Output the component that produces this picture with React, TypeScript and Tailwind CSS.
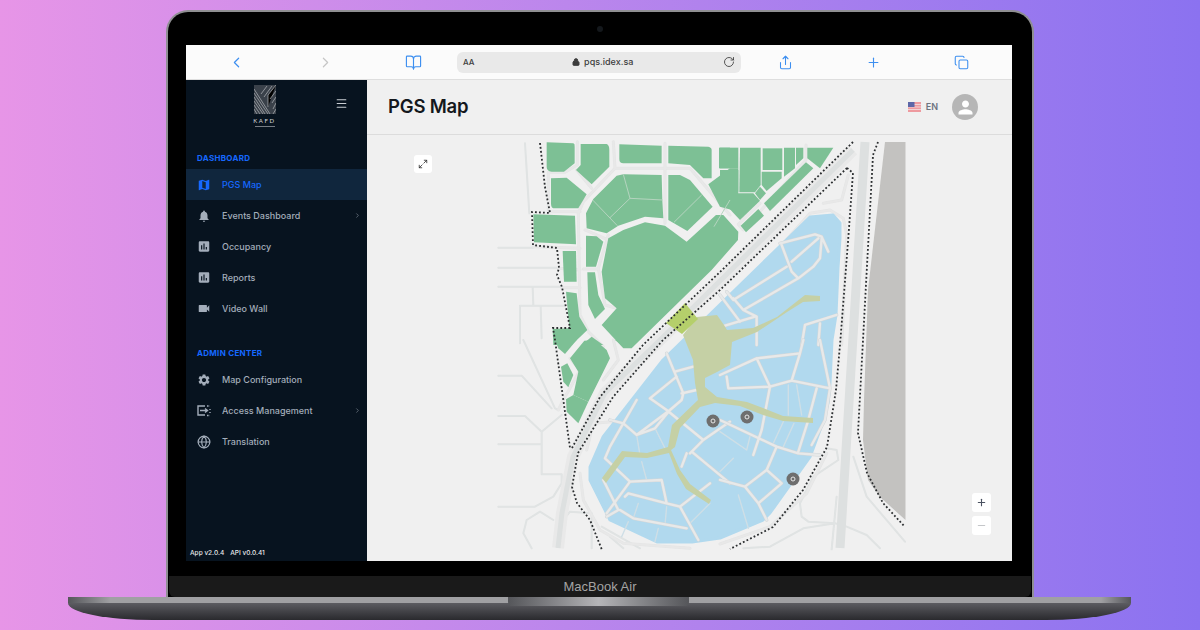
import { BookOpen, ChevronLeft, ChevronRight, ChevronRight as Caret, Copy, Globe, Lock, Maximize2, Menu, Minus, Plus, RotateCw, Share } from "lucide-react";
import { MdAssessment, MdMap, MdNotifications, MdPerson, MdSettings, MdVideocam } from "react-icons/md";
import type { ReactNode } from "react";

// map pieces are traced per region, each group has its own origin at 3x
const Z3 = "translate(490 135) scale(0.3333)";
const Z4 = "translate(720 135) scale(0.3333)";
const Z5 = "translate(490 340) scale(0.3333)";
const Z6 = "translate(720 340) scale(0.3333)";

const greenZ3 = [
  "M170,22 L250,25 Q255,26 254,35 L254,85 L222,110 L185,110 Q170,108 170,95 Z",
  "M272,27 L350,27 Q358,30 358,45 L358,95 L305,148 L258,105 L272,90 Z",
  "M388,28 L515,32 L515,85 L400,85 Q388,85 388,72 Z",
  "M535,32 L655,35 Q665,37 665,45 L665,130 L640,130 L600,90 L535,85 Z",
  "M687,38 L720,38 L720,100 L687,100 Z",
  "M183,130 L230,128 L290,178 L265,220 L190,220 Q183,218 183,205 Z",
  "M310,192 L380,122 L400,118 L515,120 L517,195 L520,250 L465,245 L385,272 L350,295 L290,280 L288,235 Z",
  "M535,120 L570,120 L600,135 L668,215 L592,288 L535,255 Z",
  "M655,148 L720,100 L745,100 L745,230 L690,215 Z",
  "M400,285 L465,262 L525,272 L590,320 L678,240 L700,240 L745,290 L744,315 L665,405 L425,640 L400,640 L335,570 L380,520 L345,490 L335,410 L355,310 Z",
  "M130,238 L255,242 L258,328 L132,322 Z",
  "M218,348 L258,348 L260,440 L222,440 Z",
  "M288,302 L320,304 L340,320 L318,395 L288,395 Z",
  "M292,412 L315,412 L325,480 L345,522 L315,552 L295,510 Z",
  "M228,470 L260,475 L268,545 L292,585 L245,630 L190,630 L188,582 L238,580 Z",
  "M275,630 L305,605 L340,630 Z",
];
const greenZ4 = [
  "M0,38 L55,38 L55,100 L0,100 Z",
  "M60,38 L122,38 L122,105 L122,150 L105,172 L58,172 Z",
  "M128,40 L187,40 L187,105 L128,105 Z",
  "M192,38 L225,38 L225,100 L192,125 Z",
  "M228,38 L250,38 L250,70 L228,90 Z",
  "M262,38 L340,38 L300,100 L262,70 Z",
  "M0,105 L55,105 L55,170 L15,210 L0,195 Z",
  "M125,110 L185,110 L185,130 L140,168 L125,150 Z",
  "M105,175 L120,155 L138,175 L120,195 Z",
  "M55,175 L100,175 L120,197 L60,255 L18,210 Z",
  "M115,222 L132,242 L78,292 L62,272 Z",
  "M258,82 L280,100 L150,228 L132,205 Z",
];
const greenZ5 = [
  "M195,0 L260,0 L225,42 L205,25 Z",
  "M283,2 L315,0 L350,30 L360,55 L340,95 L295,185 L250,165 L265,95 L240,55 Z",
  "M213,80 L232,70 L250,105 L235,142 L220,125 Z",
  "M228,178 L250,165 L295,185 L265,250 L230,215 Z",
];

const thinGreen = [
  "M400,118 L420,190 L360,248 M420,190 L518,195 M308,195 L382,272 M635,180 L552,262 M720,195 L672,275",
];

const outerRoads = [
  { t: Z3, d: "M262,20 L262,90 L225,112 L175,112 L175,225 M370,20 L375,100 L280,200 L265,235 L270,540 L295,590 L340,635 M375,100 L600,100 L720,240 M525,25 L525,265 M180,230 L270,230 M285,285 L355,315 M355,300 L325,400 L345,510 L380,520 M260,105 L305,160 M130,335 L270,340 M205,400 L270,405 M215,458 L270,458 M280,402 L320,402" },
  { t: Z4, d: "M258,30 L258,75 L70,285 L55,268 L120,205 M190,325 L270,235 L330,225 L370,250 L380,300 L365,630 M310,205 L365,195 L385,120" },
  { t: Z5, d: "M270,400 L280,480 L330,570 L400,610 L600,625 M370,0 L385,60 L340,120 M365,245 L310,250 L290,330 M240,55 L270,90 L240,145 L225,170 L205,210" },
  { t: Z6, d: "M0,612 L150,560 L260,460 L320,340" },
];

const sideRoads = [
  { t: Z3, d: "M105,25 L118,235 M25,338 L130,338 M25,398 L205,398 M25,455 L215,455 M128,455 L130,512 M90,512 L225,512 M90,512 L90,625 M152,512 L155,610" },
  { t: Z5, d: "M100,0 L195,205 L205,210 M25,107 L95,107 L185,205 M25,228 L105,228 L155,275 L215,225 M25,313 L155,313 M155,275 L155,403 L215,403 L215,430 L190,470 L135,500 L25,500 M125,625 L100,580 L110,540 L150,515 L190,540 M220,540 L240,515 L305,520 L305,625 M360,590 L400,625 M335,560 L450,625" },
  { t: Z6, d: "M320,325 L350,330 L355,360 L280,410 L240,490 L245,530 L265,545 L345,550 L380,560 L440,585 L480,625 M70,625 L150,620 L250,565 L345,550 M400,350 L440,470 L555,605 M350,470 L335,628" },
];

const blueRoads = [
  { t: Z4, d: "M180,325 L285,298 L305,305 L325,350 M305,310 L300,370 L280,395 L235,430 L70,525 L40,490 M185,330 L215,410 L235,430 M200,395 L40,495 L20,470 M215,380 L295,310 M70,525 L110,545 M350,540 L255,570 L245,630 M300,565 L295,630 M110,545 L110,630 M5,575 L105,545 M0,480 L60,560" },
  { t: Z5, d: "M530,40 L580,160 L575,180 L540,210 L440,285 L400,250 L360,240 M480,175 L530,210 L640,300 M555,95 L610,80 M575,160 L620,150 M440,285 L495,265 L540,210 M440,180 L360,320 L345,355 L420,425 L350,520 M340,420 L385,510 L350,530 M420,425 L515,420 L530,490 M405,470 L415,460 L530,490 L570,500 L625,600 M390,510 L430,535 L590,565 M570,500 L660,430 M600,340 L640,300 L720,245 M590,340 L575,380 M605,335 L720,430 M480,175 L560,110" },
  { t: Z6, d: "M0,105 L110,55 L240,40 L250,0 M110,55 L150,140 L25,145 L20,110 M150,140 L215,122 L330,145 L300,0 M215,122 L240,40 M330,145 L315,240 L275,315 M290,145 L265,240 L235,335 M150,140 L125,270 L100,345 M0,240 L170,320 L235,340 L300,345 M170,320 L140,390 L75,440 L0,420 M140,390 L185,430 L115,490 L140,540 M75,440 L115,490" },
];

const thinBlue = [
  { t: Z5, d: "M495,265 L525,325 M440,285 L450,345 M455,365 L470,420 M445,490 L430,535 M530,500 L525,555 M415,545 L395,590 M505,565 L495,605 M600,550 L660,490" },
  { t: Z6, d: "M205,135 L205,225 M230,135 L245,225 M190,245 L160,310 M222,250 L190,320 M90,290 L80,330 L0,275 M55,465 L85,565 M40,355 L0,395" },
];

function MapCanvas() {
  const road = (items: { t: string; d: string }[], under: string, over: string, w: number) =>
    items.map((r, i) => (
      <g key={i} transform={r.t} fill="none" strokeLinejoin="round" strokeLinecap="round">
        <path d={r.d} stroke={under} strokeWidth={w} />
        <path d={r.d} stroke={over} strokeWidth={w - 3} />
      </g>
    ));
  return (
    <svg viewBox="367 135 645 426" className="w-full h-full block">
      {road(sideRoads, "#dfe2e2", "#e1e4e4", 6)}
      {road(outerRoads, "#e4e5e5", "#e8e8e8", 9)}

      {/* grey block */}
      <path d="M885,142 L905.5,142 L905.5,520 L880,497 L868,480 L863,440 L864,400 L868,290 Z" fill="#c3c2c0" />

      {/* trunk roads */}
      <path d="M558,548 L562,513 L573,457 L605,393 L660,340 L853,150" fill="none" stroke="#e9e9e9" strokeWidth="12" />
      <path d="M558,548 L562,513 L573,457 L605,393 L660,340 L853,150" fill="none" stroke="#dde0e0" strokeWidth="5" />
      <path d="M865,142 L840,548" fill="none" stroke="#dde0e0" strokeWidth="9" />

      {/* green blocks */}
      <g fill="#7dc095">
        <g transform={Z3}>{greenZ3.map((d, i) => <path key={i} d={d} />)}</g>
        <g transform={Z4}>{greenZ4.map((d, i) => <path key={i} d={d} />)}</g>
        <g transform={Z5}>
          {greenZ5.map((d, i) => <path key={i} d={d} />)}
          <path d="M375,0 L445,0 Q420,18 400,18 Z" />
        </g>
      </g>
      <g transform={Z3} fill="none" stroke="#b5d4bf" strokeWidth="3">
        {thinGreen.map((d, i) => <path key={i} d={d} />)}
      </g>

      {/* teardrop district */}
      <path
        d="M663,360 L810,217 L833,215 L840,223 L840,238 L838,268 L836,315 L832,340 L830,383 L828,403 L820,430 L810,457 L770,513 L763,520 L720,538 L692,542 L657,542 L610,520 L590,480 L590,467 L603,437 Z"
        fill="#b1d9ee"
        stroke="#b1d9ee"
        strokeWidth="3"
        strokeLinejoin="round"
      />
      {road(thinBlue, "#cfdfe6", "#cfdfe6", 4)}
      {road(blueRoads, "#d2d6d8", "#e8e9e9", 10)}

      {/* pedestrian spine */}
      <path
        d="M683,335 L697,317 L717,315 L724,325 L727,330 L753,328 L777,317 L805,295 L820,296 L820,301 L803,302 L787,312 L757,332 L732,342 L730,365 L717,372 L705,378 L705,387 L717,397 L747,402 L763,408 L783,416 L813,418 L813,423 L783,421 L763,415 L740,406 L715,403 L700,407 L680,428 L675,447 L671,450 L680,470 L690,484 L711,500 L709,504 L686,489 L677,474 L669,453 L647,458 L625,457 L606,483 L602,478 L622,451 L647,453 L668,447 L672,425 L698,400 L695,383 L693,360 Z"
        fill="#c5d0a5"
      />
      <path d="M666,323 L685,303 L698,319 L682,334 Z" fill="#b5cf6b" />

      {/* boundary dots */}
      <g fill="none" stroke="#2b2e30" strokeWidth="1.8" strokeDasharray="1.8 2.2">
        <path d="M853,142 L720,272 L643,345 L600,397 L572,448" />
        <path d="M540,143 L545,187 L550,213 L532,212 L533,245 L557,248 L559,268 L557,275 L562,287 L570,328 L553,328 L555,340 L570,448" />
        <path d="M847,168 L853,173 L848,242 L840,345 L836,390 L827,447 L803,490 L773,527 L730,549" />
        <path d="M847,168 L720,290 L663,340 L613,397 L578,453 L572,487 L577,503 L590,520 L602,550" />
        <path d="M878,142 L873,155 L863,340 L858,433 L867,473 L883,503 L905,527" />
      </g>

      {/* parking pins */}
      {[[713, 421], [747, 417], [793, 479]].map(([x, y]) => (
        <g key={x}>
          <circle cx={x} cy={y} r="6.5" fill="#6e6e6e" />
          <circle cx={x} cy={y} r="2" fill="none" stroke="#e8e8e8" strokeWidth="1" />
        </g>
      ))}
    </svg>
  );
}

function KafdLogo() {
  return (
    <div className="flex flex-col items-center">
      <svg viewBox="0 0 22 29" className="w-[22px] h-[29px] block">
        <rect width="22" height="29" fill="#3a414a" />
        <g stroke="#b4b8bc" strokeWidth="0.7">
          <path d="M0,8 L14,29 M0,12 L11,29 M0,16 L9,29 M0,20 L6,29 M0,24 L3,29 M0,4 L16,29" />
          <path d="M22,0 L14,10 L14,22 M22,6 L16,14 M22,12 L18,18 M22,18 L19,24 M22,24 L19,29 M18,1 L10,12 M13,1 L7,9" />
        </g>
      </svg>
      <span className="mt-[3px] text-[6px] leading-[8px] tracking-[1.6px] text-[#d5d8dc] font-['Lato',sans-serif]">KAFD</span>
      <span className="w-[20px] h-px mt-[1px] bg-[#767c84]" />
    </div>
  );
}

function AccessIcon() {
  return (
    <svg viewBox="0 0 14 12" className="w-[14px] h-[12px]" fill="none" stroke="#a3adba" strokeWidth="1.4">
      <path d="M8 1 H1 V10 H8" />
      <path d="M10 1 H13 M13 4 V5 M13 7 V8 M10 10.5 H13" strokeDasharray="1.6 1.2" />
      <path d="M3 5.5 H10 M8 3.5 L10.5 5.5 L8 7.5" />
    </svg>
  );
}

function NavItem({ icon, label, active, caret }: { icon: ReactNode; label: string; active?: boolean; caret?: boolean }) {
  return (
    <div className={`h-[31px] flex items-center pl-[11px] pr-[6px] ${active ? "bg-[#10263d] text-[#1668ff]" : "text-[#a3adba]"}`}>
      <span className="w-[14px] h-[14px] flex items-center justify-center shrink-0">{icon}</span>
      <span className="ml-[11px] flex-1 text-[9px] font-medium font-['Inter',sans-serif]">{label}</span>
      {caret && <Caret size={7} className="text-[#8b95a1]" />}
    </div>
  );
}

function Sidebar() {
  return (
    <aside className="w-[181px] shrink-0 bg-[#07131f] flex flex-col font-['Inter',sans-serif]">
      <div className="h-[72px] pt-[5px] pr-[24px] relative flex justify-center">
        <KafdLogo />
        <Menu size={13} strokeWidth={2} className="absolute left-[149px] top-[17px] text-[#c9ced3]" />
      </div>
      <div className="h-[12px] mb-[5px] pl-[11px] flex items-center text-[8px] font-bold tracking-[0.3px] text-[#1668ff]">DASHBOARD</div>
      <NavItem active label="PGS Map" icon={<MdMap size={18} />} />
      <NavItem caret label="Events Dashboard" icon={<MdNotifications size={18} />} />
      <NavItem label="Occupancy" icon={<MdAssessment size={17} />} />
      <NavItem label="Reports" icon={<MdAssessment size={17} />} />
      <NavItem label="Video Wall" icon={<MdVideocam size={19} />} />
      <div className="h-[16px] mt-[21px] pl-[11px] flex items-center text-[8px] font-bold tracking-[0.3px] text-[#1668ff]">ADMIN CENTER</div>
      <div className="h-[3px]" />
      <NavItem label="Map Configuration" icon={<MdSettings size={18} />} />
      <NavItem caret label="Access Management" icon={<AccessIcon />} />
      <NavItem label="Translation" icon={<Globe size={14} />} />
      <div className="mt-auto h-[14px] pl-[4px] flex items-center gap-[6px] text-[6.5px] font-medium text-[#e6e8ea]">
        <span>App v2.0.4</span>
        <span>API v0.0.41</span>
      </div>
    </aside>
  );
}

function SafariBar() {
  return (
    <div className="h-[35px] shrink-0 bg-[#fbfbfb] border-b border-[#dedede] flex items-center relative text-[#3d8ff0]">
      <div className="w-[271px] flex items-center justify-between pl-[42px] pr-[35px]">
        <ChevronLeft size={17} strokeWidth={1.7} />
        <ChevronRight size={17} strokeWidth={1.7} className="text-[#c6c6c6]" />
        <BookOpen size={17} strokeWidth={1.6} />
      </div>
      <div className="w-[284px] h-[21px] rounded-md bg-[#e9e9e9] flex items-center px-[6px] text-[#3c3c3c] font-['Inter',sans-serif]">
        <span className="text-[8px] font-medium">AA</span>
        <div className="flex-1 flex items-center justify-center gap-[4px] pl-[8px]">
          <Lock size={8} strokeWidth={3} fill="currentColor" />
          <span className="text-[9px] font-medium">pqs.idex.sa</span>
        </div>
        <RotateCw size={12} strokeWidth={1.7} />
      </div>
      <div className="flex-1 flex items-center justify-between pl-[37px] pr-[43px]">
        <Share size={15} strokeWidth={1.7} />
        <Plus size={15} strokeWidth={1.8} />
        <Copy size={15} strokeWidth={1.7} />
      </div>
    </div>
  );
}

function MainPanel() {
  return (
    <main className="flex-1 bg-[#f0f0f0] flex flex-col min-w-0">
      <header className="h-[55px] shrink-0 border-b border-[#dcdcdc] pl-[21px] pr-[34px] flex items-center">
        <h1 className="text-[18.5px] font-semibold text-[#14181d] font-['Inter',sans-serif] tracking-[-0.2px]">PGS Map</h1>
        <div className="ml-auto flex items-center">
          <svg viewBox="0 0 13 10" className="w-[13px] h-[10px]">
            <rect width="13" height="10" fill="#ee9a9f" />
            <path d="M0 2.5 H13 M0 5 H13 M0 7.5 H13" stroke="#f3e2e4" strokeWidth="0.8" />
            <rect width="6.5" height="5" fill="#5d67a8" />
          </svg>
          <span className="ml-[5px] text-[9px] font-semibold text-[#6d7480] font-['Inter',sans-serif]">EN</span>
          <div className="ml-[14px] w-[26px] h-[26px] rounded-full bg-[#b6b6b6] flex items-center justify-center">
            <MdPerson size={21} className="text-white" />
          </div>
        </div>
      </header>
      <div className="flex-1 relative min-h-0">
        <MapCanvas />
        <button className="absolute left-[47px] top-[20px] w-[18px] h-[18px] rounded-[3px] bg-white flex items-center justify-center text-[#333]">
          <Maximize2 size={10} strokeWidth={2} />
        </button>
        <div className="absolute left-[605px] top-[358px] flex flex-col gap-[4px]">
          <button className="w-[19px] h-[19px] rounded-[3px] bg-white flex items-center justify-center text-[#4a5160]">
            <Plus size={11} strokeWidth={2.4} />
          </button>
          <button className="w-[19px] h-[19px] rounded-[3px] bg-white flex items-center justify-center text-[#c4c6c9]">
            <Minus size={11} strokeWidth={2.4} />
          </button>
        </div>
      </div>
    </main>
  );
}

export default function App() {
  return (
    <div className="w-[1200px] h-[630px] overflow-hidden bg-linear-to-r from-[#e795e7] to-[#8b72f0] flex flex-col items-center pt-[10px]">
      {/* lid */}
      <div className="w-[868px] h-[587px] shrink-0 rounded-t-[22px] bg-black border-x-2 border-t-2 border-[#8f8f92] flex flex-col items-center">
        <div className="h-[33px] w-full shrink-0 flex items-center justify-center">
          <span className="w-[6px] h-[6px] rounded-full bg-[#14181c]" />
        </div>
        <div className="w-[826px] h-[516px] shrink-0 mr-[2px] bg-white flex flex-col overflow-hidden">
          <SafariBar />
          <div className="flex-1 flex min-h-0">
            <Sidebar />
            <MainPanel />
          </div>
        </div>
        <div className="mt-[15px] flex-1 w-[862px] rounded-b-[6px] bg-[#1a1a1a] flex items-center justify-center text-[13px] text-[#a4a4a4] font-['Liberation_Sans',sans-serif]">
          MacBook Air
        </div>
      </div>
      {/* base */}
      <div className="w-[1063px] h-[23px] shrink-0 ml-[-1px] rounded-bl-[85px_17px] rounded-br-[85px_17px] overflow-hidden bg-linear-to-b from-[#6f6f75] to-[#2a2a2e] relative">
        <div className="h-[6px] bg-linear-to-r from-[#55565a] via-[#a0a0a3] via-[4%] to-[#a0a0a3]" />
        <div className="absolute top-0 right-0 w-[30px] h-[6px] bg-linear-to-r from-[#a0a0a3] to-[#55565a]" />
        <div className="absolute top-0 left-[440px] w-[181px] h-[9px] rounded-b-[4px] bg-linear-to-r from-[#55565a] via-[#b5b5b8] to-[#55565a]" />
      </div>
    </div>
  );
}
